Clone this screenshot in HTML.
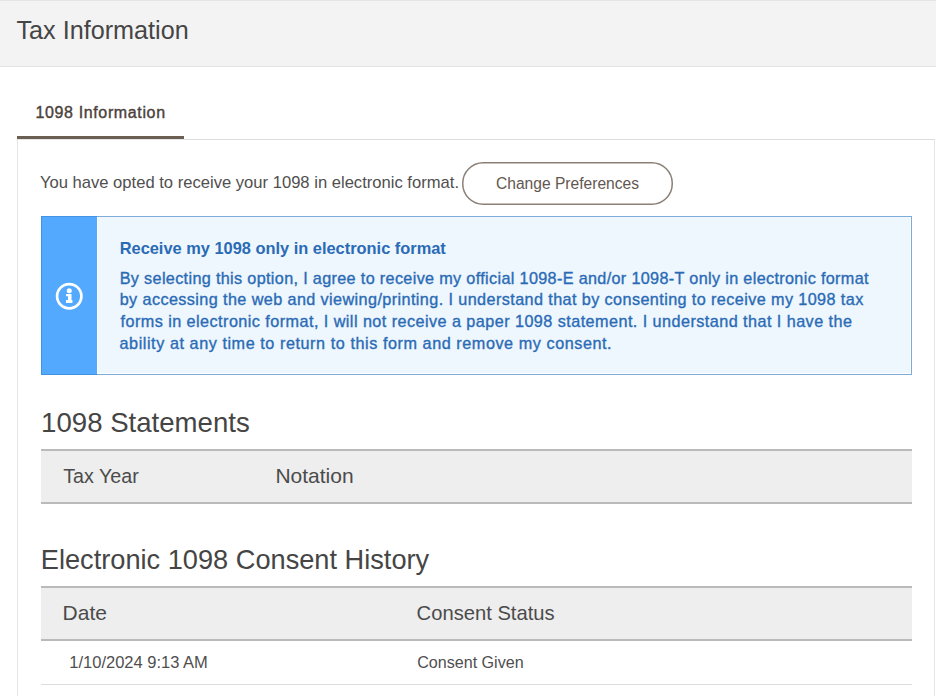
<!DOCTYPE html>
<html><head><meta charset="utf-8"><title>Tax Information</title>
<style>
html,body{margin:0;padding:0;background:#fff;width:936px;height:696px;overflow:hidden;position:relative;font-family:'Liberation Sans', sans-serif}
.t{position:absolute;white-space:nowrap;font-family:'Liberation Sans', sans-serif}
.r{position:absolute}
</style></head><body>
<div class="r" style="left:0;top:0;width:936px;height:66px;background:#f3f3f3;border-top:1px solid #e4e4e4;box-sizing:border-box"></div>
<div class="r" style="left:0;top:66px;width:936px;height:1px;background:#e2e2e2"></div>
<div class="r" style="left:17px;top:139px;width:918px;height:557px;border:1px solid #e6e6e6;border-bottom:none;box-sizing:border-box"></div>
<div class="r" style="left:184px;top:139px;width:751px;height:1px;background:#dcdcdc"></div>
<div class="r" style="left:17px;top:136px;width:167px;height:3px;background:#6b5e52"></div>
<svg class="r" style="left:462px;top:162px" width="211" height="43" viewBox="0 0 211 43"><rect x="0.75" y="0.75" width="209.5" height="41.5" rx="20.5" fill="none" stroke="#8a8077" stroke-width="1.5"/></svg>
<div class="r" style="left:41px;top:216px;width:871px;height:159px;border:1px solid #7fabd9;box-sizing:border-box;background:#fff"></div>
<div class="r" style="left:41px;top:216px;width:56px;height:159px;background:#52a9fe;border:1px solid #4392e3;border-right:none;box-sizing:border-box"></div>
<div class="r" style="left:98px;top:217px;width:812px;height:156px;background:#eef6fe"></div>
<svg class="r" style="left:50px;top:278px" width="38" height="38" viewBox="0 0 38 38">
 <circle cx="19.25" cy="18.2" r="12.15" fill="none" stroke="#fff" stroke-width="2.7"/>
 <circle cx="19.28" cy="12.65" r="2.5" fill="#fff"/>
 <path d="M16.1 16.1 H21.5 V22.1 H22.4 V25.0 H16.0 V22.1 H18.0 V18.3 H16.1 Z" fill="#fff"/>
</svg>
<div class="r" style="left:41px;top:449px;width:871px;height:55px;background:#eeeeee;border-top:2px solid #bababa;border-bottom:2px solid #bababa;box-sizing:border-box"></div>
<div class="r" style="left:41px;top:586px;width:871px;height:55px;background:#eeeeee;border-top:2px solid #bababa;border-bottom:2px solid #bababa;box-sizing:border-box"></div>
<div class="r" style="left:41px;top:684px;width:871px;height:1px;background:#dddddd"></div>
<div class="t" style="left:16.50px;top:18.20px;font-size:25.2px;line-height:25.2px;font-weight:400;color:#454545">Tax Information</div>
<div class="t" style="left:35.50px;top:105.20px;font-size:16.0px;line-height:16.0px;font-weight:400;color:#4b423b;-webkit-text-stroke:0.4px #4b423b;letter-spacing:0.63px">1098 Information</div>
<div class="t" style="left:39.90px;top:174.90px;font-size:16.6px;line-height:16.6px;font-weight:400;color:#4f4f4f">You have opted to receive your 1098 in electronic format.</div>
<div class="t" style="left:496.00px;top:176.00px;font-size:15.6px;line-height:15.6px;font-weight:400;color:#62584f">Change Preferences</div>
<div class="t" style="left:119.70px;top:240.00px;font-size:16.4px;line-height:16.4px;font-weight:700;color:#2a6bb5">Receive my 1098 only in electronic format</div>
<div class="t" style="left:119.70px;top:270.00px;font-size:16.2px;line-height:16.2px;font-weight:400;color:#2a6bb5;-webkit-text-stroke:0.35px #2a6bb5;letter-spacing:0.343px">By selecting this option, I agree to receive my official 1098-E and/or 1098-T only in electronic format</div>
<div class="t" style="left:119.70px;top:291.40px;font-size:16.2px;line-height:16.2px;font-weight:400;color:#2a6bb5;-webkit-text-stroke:0.35px #2a6bb5;letter-spacing:0.406px">by accessing the web and viewing/printing. I understand that by consenting to receive my 1098 tax</div>
<div class="t" style="left:120.50px;top:312.90px;font-size:16.2px;line-height:16.2px;font-weight:400;color:#2a6bb5;-webkit-text-stroke:0.35px #2a6bb5;letter-spacing:0.449px">forms in electronic format, I will not receive a paper 1098 statement. I understand that I have the</div>
<div class="t" style="left:119.50px;top:335.00px;font-size:16.2px;line-height:16.2px;font-weight:400;color:#2a6bb5;-webkit-text-stroke:0.35px #2a6bb5;letter-spacing:0.562px">ability at any time to return to this form and remove my consent.</div>
<div class="t" style="left:41.10px;top:408.90px;font-size:27.6px;line-height:27.6px;font-weight:400;color:#454545">1098 Statements</div>
<div class="t" style="left:63.20px;top:466.60px;font-size:19.7px;line-height:19.7px;font-weight:400;color:#4b4b4b">Tax Year</div>
<div class="t" style="left:275.40px;top:464.70px;font-size:21.0px;line-height:21.0px;font-weight:400;color:#4b4b4b">Notation</div>
<div class="t" style="left:40.80px;top:546.20px;font-size:27.2px;line-height:27.2px;font-weight:400;color:#454545">Electronic 1098 Consent History</div>
<div class="t" style="left:62.60px;top:602.00px;font-size:21.0px;line-height:21.0px;font-weight:400;color:#4b4b4b">Date</div>
<div class="t" style="left:416.60px;top:603.20px;font-size:20.2px;line-height:20.2px;font-weight:400;color:#4b4b4b">Consent Status</div>
<div class="t" style="left:69.30px;top:653.80px;font-size:16.5px;line-height:16.5px;font-weight:400;color:#4f4f4f">1/10/2024 9:13 AM</div>
<div class="t" style="left:417.20px;top:654.10px;font-size:16.1px;line-height:16.1px;font-weight:400;color:#4f4f4f">Consent Given</div>
</body></html>
